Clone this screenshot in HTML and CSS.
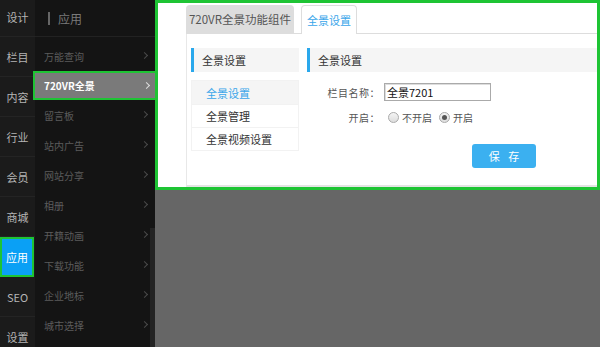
FILE: index.html
```html
<!DOCTYPE html>
<html lang="zh">
<head>
<meta charset="utf-8">
<title>应用 - 720VR全景</title>
<link rel="stylesheet" href="styles.css">
</head>
<body>
<div class="app">
  <nav class="nav1">
    <ul>
      <li>设计</li>
      <li>栏目</li>
      <li>内容</li>
      <li>行业</li>
      <li>会员</li>
      <li>商城</li>
      <li class="on">应用</li>
      <li>SEO</li>
      <li>设置</li>
    </ul>
  </nav>
  <nav class="nav2">
    <div class="nav2-head"><span class="bar"></span>应用</div>
    <ul>
      <li>万能查询<i class="chev"></i></li>
      <li class="on">720VR全景<i class="chev"></i></li>
      <li>留言板<i class="chev"></i></li>
      <li>站内广告<i class="chev"></i></li>
      <li>网站分享<i class="chev"></i></li>
      <li>相册<i class="chev"></i></li>
      <li>开籍动画<i class="chev"></i></li>
      <li>下载功能<i class="chev"></i></li>
      <li>企业地标<i class="chev"></i></li>
      <li>城市选择<i class="chev"></i></li>
    </ul>
    <div class="scroll"></div>
  </nav>
  <main class="main">
    <div class="panel">
      <div class="tabs">
        <div class="tab">720VR全景功能组件</div>
        <div class="tab active">全景设置</div>
      </div>
      <div class="card">
        <aside class="side">
          <div class="head">全景设置</div>
          <ul class="menu">
            <li class="cur">全景设置</li>
            <li>全景管理</li>
            <li>全景视频设置</li>
          </ul>
        </aside>
        <section class="content">
          <div class="head">全景设置</div>
          <div class="form">
            <div class="row">
              <label class="lbl">栏目名称：</label>
              <div class="input">全景7201</div>
            </div>
            <div class="row radios">
              <label class="lbl">开启：</label>
              <span class="radio"></span><span class="rtext">不开启</span>
              <span class="radio checked"></span><span class="rtext">开启</span>
            </div>
            <div class="btnrow"><button class="save">保 存</button></div>
          </div>
        </section>
      </div>
    </div>
  </main>
</div>
</body>
</html>
```

FILE: styles.css
```css
* { box-sizing: border-box; margin: 0; padding: 0; }
html, body { width: 600px; height: 347px; overflow: hidden; }
body {
  font-family: "Noto Sans CJK SC", "Noto Sans", sans-serif;
  font-size: 11px;
  background: #666;
}
ul { list-style: none; }
.app { display: flex; height: 347px; }

.nav1 { width: 35px; background: #1b1b1b; overflow: hidden; }
.nav1 ul { margin-top: -3px; }
.nav1 li {
  height: 40px;
  display: flex; align-items: center; justify-content: center;
  color: #b5b5b5; font-size: 11px;
  border-bottom: 1px solid #242424;
}
.nav1 li.on {
  background: #0aa0f5; color: #fff;
  border: 2px solid #1ec434;
  margin-right: 1px;
}

.nav2 { width: 120px; background: #141414; position: relative; }
.nav2-head {
  height: 37px; display: flex; align-items: center;
  padding-left: 13px; color: #7a7a7a; font-size: 12px;
  border-bottom: 1px solid #222;
}
.nav2-head .bar { width: 2px; height: 13px; background: #666; margin-right: 8px; }
.nav2 ul { padding-top: 4px; }
.nav2 li {
  height: 30px; display: flex; align-items: center;
  padding-left: 9px; color: #5c5c5c; font-size: 10px;
  position: relative;
}
.nav2 li.on {
  height: 29px;
  background: #7a7a7a; color: #fff; font-weight: bold;
  border: 2px solid #1ec434;
  margin-left: -2px; margin-right: -2px;
  padding-left: 9px;
  z-index: 2;
}
.chev {
  position: absolute; right: 8px; top: 50%;
  width: 5px; height: 5px; margin-top: -3px;
  border-top: 1px solid #4a4a4a; border-right: 1px solid #4a4a4a;
  transform: rotate(45deg);
}
.nav2 li.on .chev { border-color: #ddd; right: 6px; }
.scroll {
  position: absolute; right: 0; top: 228px; bottom: 0;
  width: 5px; background: #232323;
}

.main { flex: 1; }
.panel {
  height: 190px;
  background: #fff;
  border: 3px solid #1ec434;
  padding: 2px 0 0 28px;
  display: flex; flex-direction: column;
}
.tabs {
  display: flex; gap: 7px; height: 29px;
  border-bottom: 1px solid #ddd;
}
.tab {
  width: 108px; height: 28px;
  background: #ddd; color: #555; font-size: 11.5px;
  border-radius: 4px 4px 0 0;
  display: flex; align-items: center; justify-content: center;
  white-space: nowrap;
}
.tab.active {
  width: 56px; height: 29px;
  background: #fff; color: #3aa6ea; font-size: 11px;
  border: 1px solid #ddd; border-bottom: none;
}
.card {
  flex: 1;
  border-left: 1px solid #e8e8e8;
  border-bottom: 2px solid #e4e4e4;
  display: flex; gap: 8px;
  padding: 14px 0 0 4px;
}
.head {
  height: 24px; background: #f5f5f5;
  border-left: 3px solid #2aa8ec;
  display: flex; align-items: center;
  padding-left: 8px; color: #333; font-size: 11px;
}
.side { width: 108px; }
.menu { margin-top: 8px; border: 1px solid #f2f2f2; }
.menu li {
  height: 23px; display: flex; align-items: center;
  padding-left: 14px; color: #333;
  border-top: 1px solid #f2f2f2;
}
.menu li:first-child { border-top: none; }
.menu li.cur { background: #f5f5f5; color: #3aa6ea; }

.content { flex: 1; }
.form { padding-top: 11px; }
.row { display: flex; align-items: center; height: 18px; }
.lbl { width: 73px; text-align: right; color: #555; font-size: 10px; margin-right: 4px; letter-spacing: 0.5px; }
.input {
  width: 107px; height: 18px;
  border: 1px solid #aaa; box-shadow: inset 1px 1px 0 #ddd;
  font-size: 11px; color: #111;
  padding-left: 2px; line-height: 16px;
}
.radios { margin-top: 7px; }
.radio {
  width: 11px; height: 11px; border-radius: 50%;
  border: 1px solid #aaa; background: linear-gradient(#f4f4f4, #ddd);
  margin-left: 4px; position: relative;
}
.radio.checked::after {
  content: ""; position: absolute; left: 2px; top: 2px;
  width: 5px; height: 5px; border-radius: 50%; background: #555;
}
.rtext { color: #555; font-size: 10px; margin-left: 3px; margin-right: 3px; }
.btnrow { padding: 18px 0 0 165px; }
.save {
  width: 64px; height: 24px;
  background: #3bb0f0; color: #fff; border: none; border-radius: 3px;
  font-family: inherit; font-size: 11px; letter-spacing: 3px; padding-left: 3px;
}
```
